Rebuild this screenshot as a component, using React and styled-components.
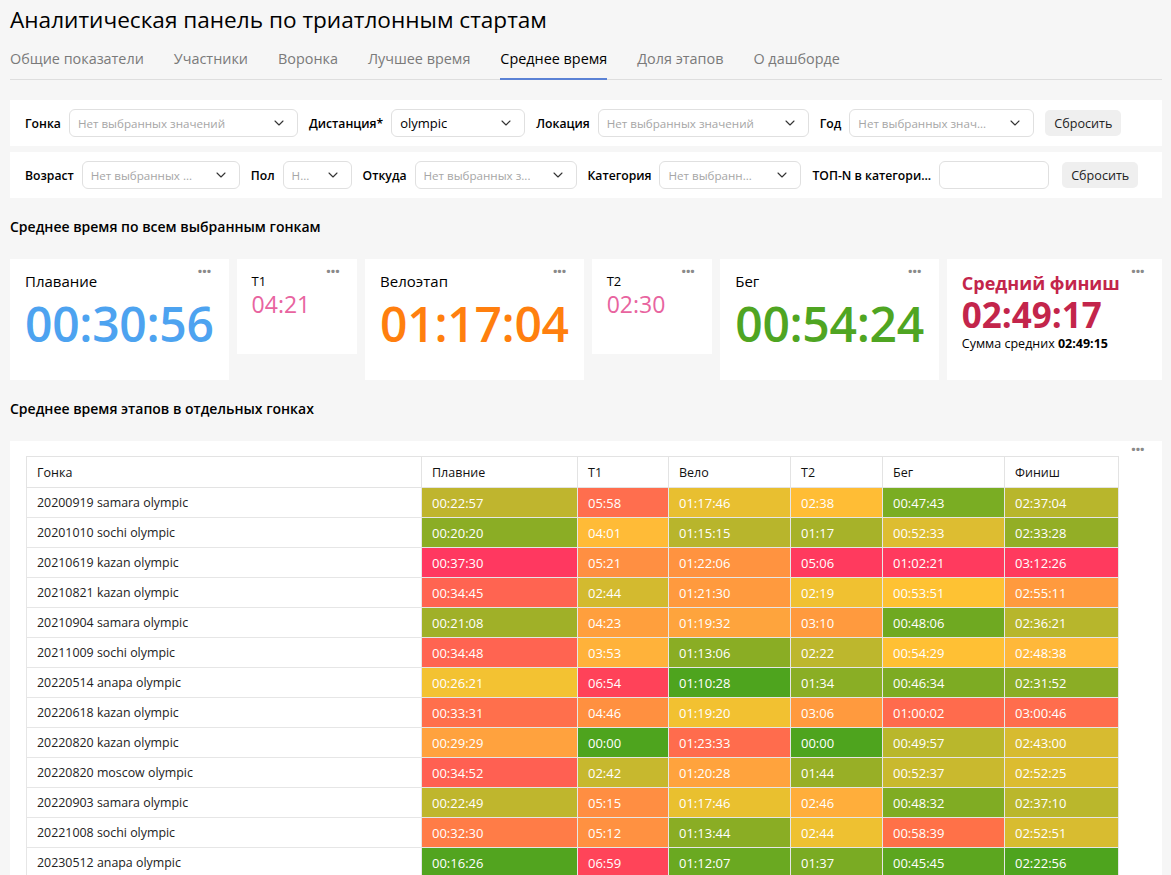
import React from 'react'
import styled, { createGlobalStyle } from 'styled-components'
import { ChevronDown } from 'lucide-react'

const GlobalStyle = createGlobalStyle`
  body {
    margin: 0;
    background: #f6f6f6;
    font-family: 'Open Sans', 'Noto Sans', sans-serif;
    color: #000;
  }
`

const Page = styled.div`
  width: 1152px;
  padding: 0 9px 0 10px;
`

const Title = styled.h1`
  margin: 5px 0 0;
  font-size: 22.6px;
  line-height: 30px;
  font-weight: 500;
`

const Tabs = styled.div`
  display: flex;
  gap: 30px;
  margin-top: 8px;
  border-bottom: 1px solid #dedede;
`

const Tab = styled.div`
  padding: 6px 0 9px;
  font-size: 14.4px;
  line-height: 20px;
  color: ${(p) => (p.$active ? '#000' : '#7a7a7a')};
  border-bottom: 2px solid ${(p) => (p.$active ? '#5b82d5' : 'transparent')};
  margin-bottom: -1px;
`

const FilterBar = styled.div`
  display: flex;
  align-items: center;
  height: 46px;
  box-sizing: border-box;
  padding: 0 15px;
  background: #fff;
  margin-top: ${(p) => p.$mt || 6}px;
`

const Label = styled.span`
  font-size: 12.2px;
  font-weight: 600;
  margin-right: 8px;
  white-space: nowrap;
`

const Select = styled.div`
  width: ${(p) => p.$w}px;
  height: 28px;
  box-sizing: border-box;
  border: 1px solid #e0e0e0;
  border-radius: 6px;
  padding: 0 10px 0 8px;
  margin-right: 11px;
  display: flex;
  align-items: center;
  justify-content: space-between;
  font-size: ${(p) => (p.$filled ? 13 : 11.6)}px;
  color: ${(p) => (p.$filled ? '#000' : '#a6a6a6')};
  flex-shrink: 0;
  & span {
    overflow: hidden;
    white-space: nowrap;
  }
`

const Input = styled.div`
  width: ${(p) => p.$w}px;
  height: 28px;
  box-sizing: border-box;
  border: 1px solid #e0e0e0;
  border-radius: 6px;
  margin-right: 13px;
`

const ResetButton = styled.button`
  height: 26px;
  padding: 0 9px;
  border: none;
  border-radius: 5px;
  background: #efefef;
  font-family: inherit;
  font-size: 12.6px;
  color: #222;
`

const SectionTitle = styled.h2`
  margin: 19px 0 22px;
  font-size: 14px;
  line-height: 20px;
  font-weight: 600;
`

const Cards = styled.div`
  display: grid;
  grid-template-columns: 218fr 121fr 218fr 121fr 218fr 216fr;
  gap: 8px;
  align-items: start;
`

const Card = styled.div`
  position: relative;
  background: #fff;
  height: ${(p) => (p.$small ? 95 : 121)}px;
  box-sizing: border-box;
  padding: ${(p) => (p.$small ? '13px 15px' : '12px 15px')};
`

const Dots = styled.span`
  position: absolute;
  top: 1px;
  right: 18px;
  font-size: 19px;
  line-height: 22px;
  font-weight: 700;
  color: #8a8a8a;
  letter-spacing: -1px;
`

const CardLabel = styled.div`
  font-size: ${(p) => (p.$small ? 13 : 15)}px;
  line-height: ${(p) => (p.$small ? 18 : 20)}px;
  font-weight: 500;
`

const BigValue = styled.div`
  margin-top: 6px;
  font-size: 48px;
  line-height: 54px;
  font-weight: 600;
  color: ${(p) => p.$color};
  letter-spacing: -0.3px;
`

const SmallValue = styled.div`
  font-size: 23px;
  line-height: 28px;
  font-weight: 500;
  color: ${(p) => p.$color};
`

const FinishTitle = styled.div`
  font-size: 18px;
  line-height: 24px;
  font-weight: 700;
  color: #c3254b;
`

const FinishValue = styled.div`
  font-size: 35px;
  line-height: 40px;
  font-weight: 700;
  color: #c3254b;
`

const FinishSum = styled.div`
  font-size: 12.5px;
  line-height: 18px;
  b {
    font-weight: 700;
  }
`

const TablePanel = styled.div`
  position: relative;
  background: #fff;
  padding: 15px 44px 0 16px;
`

const Table = styled.table`
  width: 1092px;
  border-collapse: collapse;
  table-layout: fixed;
  font-size: 13px;
`

const Col = styled.col`
  width: ${(p) => p.$w}px;
`

const Th = styled.th`
  height: 30px;
  padding: 0 10px;
  text-align: left;
  font-weight: 400;
  font-size: 12.5px;
  border: 1px solid #e3e3e3;
  color: #111;
`

const Td = styled.td`
  height: 29px;
  padding: 0 10px;
  border: 1px solid #e6e6e6;
  white-space: nowrap;
  overflow: hidden;
  font-size: ${(p) => (p.$bg ? 13 : 12.4)}px;
  color: ${(p) => (p.$bg ? '#fff' : '#222')};
  font-weight: ${(p) => (p.$bg ? 500 : 400)};
`

const TableDots = styled(Dots)`
  top: -3px;
  right: 18px;
`

const rows = [
  ['20200919 samara olympic', ['00:22:57', '05:58', '01:17:46', '02:38', '00:47:43', '02:37:04'], ['#bfb52e', '#ff6e4e', '#e8bf30', '#ffbd35', '#7aad23', '#b8b62c']],
  ['20201010 sochi olympic', ['00:20:20', '04:01', '01:15:15', '01:17', '00:52:33', '02:33:28'], ['#8bad25', '#ffbb37', '#b8b52c', '#a7b229', '#ddbd31', '#93ae26']],
  ['20210619 kazan olympic', ['00:37:30', '05:21', '01:22:06', '05:06', '01:02:21', '03:12:26'], ['#ff3860', '#ff8f42', '#ff9340', '#ff3a5e', '#ff3a5e', '#ff3a5e']],
  ['20210821 kazan olympic', ['00:34:45', '02:44', '01:21:30', '02:19', '00:53:51', '02:55:11'], ['#ff6451', '#d3ba2f', '#ff9a3e', '#f0c131', '#fec233', '#ff9a3e']],
  ['20210904 samara olympic', ['00:21:08', '04:23', '01:19:32', '03:10', '00:48:06', '02:36:21'], ['#a0b028', '#ff9f3d', '#fea43d', '#ff9a3e', '#6fa921', '#b7b62c']],
  ['20211009 sochi olympic', ['00:34:48', '03:53', '01:13:06', '02:22', '00:54:29', '02:48:38'], ['#ff6451', '#ffb23a', '#8aad24', '#bdb72d', '#ffc034', '#ffb83a']],
  ['20220514 anapa olympic', ['00:26:21', '06:54', '01:10:28', '01:34', '00:46:34', '02:31:52'], ['#f3c232', '#ff4259', '#4ea41e', '#8aae25', '#7dab23', '#8bad25']],
  ['20220618 kazan olympic', ['00:33:31', '04:46', '01:19:20', '03:06', '01:00:02', '03:00:46'], ['#ff6f4c', '#ff9040', '#f2c131', '#ff9a3e', '#ff6b4d', '#ff6d4d']],
  ['20220820 kazan olympic', ['00:29:29', '00:00', '01:23:33', '00:00', '00:49:57', '02:43:00'], ['#ffa23e', '#4ea41e', '#ff6c4d', '#4ea41e', '#b9b72c', '#d7bb30']],
  ['20220820 moscow olympic', ['00:34:52', '02:42', '01:20:28', '01:44', '00:52:37', '02:52:25'], ['#ff6052', '#c7b82e', '#ffa33d', '#98af26', '#c9b92e', '#dcbc30']],
  ['20220903 samara olympic', ['00:22:49', '05:15', '01:17:46', '02:46', '00:48:32', '02:37:10'], ['#bfb62d', '#ff8e42', '#e9c02f', '#ffae3b', '#80ac23', '#bab72c']],
  ['20221008 sochi olympic', ['00:32:30', '05:12', '01:13:44', '02:44', '00:58:39', '02:52:51'], ['#ff7c47', '#ff9141', '#8aad24', '#eec131', '#ff7148', '#d8bc30']],
  ['20230512 anapa olympic', ['00:16:26', '06:59', '01:12:07', '01:37', '00:45:45', '02:22:56'], ['#52a41f', '#ff4459', '#6aa921', '#7aab23', '#5ca61f', '#4ea41e']],
]

const columns = [
  ['Гонка', 395],
  ['Плавние', 156],
  ['T1', 91],
  ['Вело', 122],
  ['T2', 92],
  ['Бег', 122],
  ['Финиш', 114],
]

const tabs = ['Общие показатели', 'Участники', 'Воронка', 'Лучшее время', 'Среднее время', 'Доля этапов', 'О дашборде']

const Dropdown = ({ w, value, placeholder }) => (
  <Select $w={w} $filled={!!value}>
    <span>{value || placeholder}</span>
    <ChevronDown size={16} strokeWidth={1.6} color="#333" />
  </Select>
)

export default function App() {
  return (
    <Page>
      <GlobalStyle />
      <Title>Аналитическая панель по триатлонным стартам</Title>
      <Tabs>
        {tabs.map((t) => (
          <Tab key={t} $active={t === 'Среднее время'}>{t}</Tab>
        ))}
      </Tabs>

      <FilterBar $mt={20}>
        <Label>Гонка</Label>
        <Dropdown w={229} placeholder="Нет выбранных значений" />
        <Label>Дистанция*</Label>
        <Dropdown w={134} value="olympic" />
        <Label>Локация</Label>
        <Dropdown w={211} placeholder="Нет выбранных значений" />
        <Label>Год</Label>
        <Dropdown w={185} placeholder="Нет выбранных знач..." />
        <ResetButton>Сбросить</ResetButton>
      </FilterBar>
      <FilterBar>
        <Label>Возраст</Label>
        <Dropdown w={158} placeholder="Нет выбранных ..." />
        <Label>Пол</Label>
        <Dropdown w={69} placeholder="Н..." />
        <Label>Откуда</Label>
        <Dropdown w={162} placeholder="Нет выбранных з..." />
        <Label>Категория</Label>
        <Dropdown w={142} placeholder="Нет выбранн..." />
        <Label>ТОП-N в категори...</Label>
        <Input $w={110} />
        <ResetButton>Сбросить</ResetButton>
      </FilterBar>

      <SectionTitle>Среднее время по всем выбранным гонкам</SectionTitle>
      <Cards>
        <Card>
          <Dots>···</Dots>
          <CardLabel>Плавание</CardLabel>
          <BigValue $color="#4da3f0">00:30:56</BigValue>
        </Card>
        <Card $small>
          <Dots>···</Dots>
          <CardLabel $small>T1</CardLabel>
          <SmallValue $color="#e8649f">04:21</SmallValue>
        </Card>
        <Card>
          <Dots>···</Dots>
          <CardLabel>Велоэтап</CardLabel>
          <BigValue $color="#ff7f0e">01:17:04</BigValue>
        </Card>
        <Card $small>
          <Dots>···</Dots>
          <CardLabel $small>T2</CardLabel>
          <SmallValue $color="#e8649f">02:30</SmallValue>
        </Card>
        <Card>
          <Dots>···</Dots>
          <CardLabel>Бег</CardLabel>
          <BigValue $color="#4fa522">00:54:24</BigValue>
        </Card>
        <Card>
          <Dots>···</Dots>
          <FinishTitle>Средний финиш</FinishTitle>
          <FinishValue>02:49:17</FinishValue>
          <FinishSum>
            Сумма средних <b>02:49:15</b>
          </FinishSum>
        </Card>
      </Cards>

      <SectionTitle>Среднее время этапов в отдельных гонках</SectionTitle>
      <TablePanel>
        <TableDots>···</TableDots>
        <Table>
          <colgroup>
            {columns.map(([name, w]) => (
              <Col key={name} $w={w} />
            ))}
          </colgroup>
          <thead>
            <tr>
              {columns.map(([name]) => (
                <Th key={name}>{name}</Th>
              ))}
            </tr>
          </thead>
          <tbody>
            {rows.map(([name, values, colors]) => (
              <tr key={name}>
                <Td>{name}</Td>
                {values.map((v, i) => (
                  <Td key={i} $bg style={{ background: colors[i] }}>{v}</Td>
                ))}
              </tr>
            ))}
          </tbody>
        </Table>
      </TablePanel>
    </Page>
  )
}
